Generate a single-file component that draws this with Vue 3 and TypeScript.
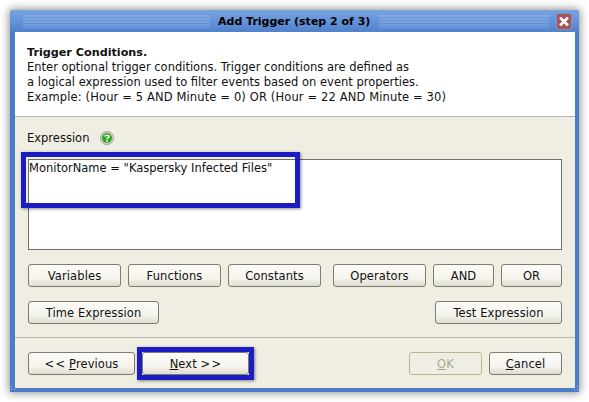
<template>
  <div class="page">
    <div class="window">
      <div class="titlebar">
        <div class="grip grip-left"></div>
        <span class="title">Add Trigger (step 2 of 3)</span>
        <div class="grip grip-right"></div>
        <div class="close" aria-label="Close">
          <svg width="14" height="15" viewBox="0 0 14 15">
            <path d="M4 4.5 L10 10.5 M10 4.5 L4 10.5" stroke="#fff" stroke-width="2.6" stroke-linecap="square" fill="none" />
          </svg>
        </div>
      </div>

      <div class="content">
        <header class="intro">
          <strong>Trigger Conditions.</strong>
          <p>Enter optional trigger conditions. Trigger conditions are defined as</p>
          <p>a logical expression used to filter events based on event properties.</p>
          <p class="example">Example: (Hour = 5 AND Minute = 0) OR (Hour = 22 AND Minute = 30)</p>
        </header>

        <section class="body">
          <div class="label-row">
            <span class="label">Expression</span>
            <svg class="help" width="14" height="14" viewBox="0 0 14 14">
              <circle cx="7" cy="7" r="6.5" fill="#d4d4cc" stroke="#a2a29a" stroke-width="1" />
              <circle cx="7" cy="7" r="5" fill="#2ea81c" />
              <path d="M5 5.6 C5 3.8 9 3.8 9 5.6 C9 6.8 7 6.8 7 8.2" stroke="#fff" stroke-width="1.6" fill="none" />
              <rect x="6.2" y="9.2" width="1.6" height="1.6" fill="#fff" />
            </svg>
          </div>

          <div class="editor">MonitorName = "Kaspersky Infected Files"</div>

          <div class="row row-ops">
            <button class="btn w93">Variables</button>
            <button class="btn w93">Functions</button>
            <button class="btn w93">Constants</button>
            <button class="btn w93 op-gap">Operators</button>
            <button class="btn w61">AND</button>
            <button class="btn w61">OR</button>
          </div>

          <div class="row row-time">
            <button class="btn time">Time Expression</button>
            <button class="btn test">Test Expression</button>
          </div>
        </section>

        <footer class="footer">
          <button class="btn nav">&lt;&#8202;&lt; <u>P</u>revious</button>
          <button class="btn nav next"><u>N</u>ext &gt;&#8202;&gt;</button>
          <button class="btn ok" disabled><u>O</u>K</button>
          <button class="btn cancel"><u>C</u>ancel</button>
        </footer>
      </div>

      <svg class="corner corner-left" width="7" height="7" viewBox="0 0 7 7">
        <path d="M1 1h1v1H1zM1 4h1v1H1zM4 4h1v1H4z" fill="#a8c2e6" />
      </svg>
      <svg class="corner corner-right" width="7" height="7" viewBox="0 0 7 7">
        <path d="M5 1h1v1H5zM5 4h1v1H5zM2 4h1v1H2z" fill="#a8c2e6" />
      </svg>

      <div class="mark mark-expr"></div>
      <div class="mark mark-next"></div>
    </div>
  </div>
</template>

<script setup lang="ts">
</script>

<style>
html,
body {
  margin: 0;
  background: #fff;
}
</style>

<style scoped>
.page {
  width: 589px;
  height: 402px;
  padding: 10px;
  box-sizing: border-box;
  overflow: hidden;
  font-family: "DejaVu Sans", sans-serif;
  font-size: 11.5px;
  color: #111;
}
.window {
  position: relative;
  width: 569px;
  height: 382px;
  display: flex;
  flex-direction: column;
  box-sizing: border-box;
  background: #4a7cc8;
  border-radius: 3px 3px 0 0;
  padding: 0 4px 4px 5px;
  box-shadow: 0 0 8px 1px rgba(0, 0, 0, 0.45);
}
.titlebar {
  height: 22px;
  flex: none;
  display: flex;
  align-items: center;
  padding: 0 8px 0 13px;
  margin: 0 -4px 0 -5px;
  border-radius: 3px 3px 0 0;
  background: linear-gradient(#78a3e0, #6292d8 55%, #4f82cc);
}
.grip {
  height: 14px;
  background: repeating-linear-gradient(transparent 0 1px, rgba(255, 255, 255, 0.14) 1px 3px);
}
.grip-left {
  flex: none;
  width: 187px;
  margin-right: 8px;
}
.grip-right {
  flex: 1;
  margin: 0 8px 0 9px;
}
.title {
  font-size: 11px;
  font-weight: 700;
  color: #000;
  white-space: nowrap;
}
.close {
  flex: none;
  width: 14px;
  height: 15px;
  background: #a9545a;
  box-shadow: 0 0 0 1px #7d93b8;
  border-radius: 2px;
}
.close svg {
  display: block;
}
.content {
  flex: 1;
  display: flex;
  flex-direction: column;
  background: #f0eee3;
}
.intro {
  height: 85px;
  flex: none;
  box-sizing: border-box;
  padding: 13px 12px 0;
  background: #fff;
  border-bottom: 1px solid #b4b4b0;
  line-height: 15px;
}
.intro strong {
  display: block;
  font-size: 11.2px;
}
.intro p {
  margin: 0;
}
.intro .example {
  letter-spacing: 0.13px;
}
.body {
  flex: none;
  height: 221px;
  box-sizing: border-box;
  padding: 0 13px;
  border-bottom: 1px solid #b9b8ab;
}
.label-row {
  height: 42px;
  display: flex;
  align-items: center;
  gap: 11px;
}
.label {
  margin-left: -1px;
}
.editor {
  height: 91px;
  box-sizing: border-box;
  padding: 1px 0 0;
  background: #fff;
  border: 1px solid #6f6f62;
  white-space: pre;
}
.row {
  display: flex;
}
.row-ops {
  margin-top: 14px;
  gap: 7px;
}
.row-time {
  margin-top: 14px;
  justify-content: space-between;
}
.btn {
  height: 23px;
  box-sizing: border-box;
  padding: 0;
  font: inherit;
  letter-spacing: 0.1px;
  color: #111;
  background: linear-gradient(#fcfbf8, #f4f3ec 65%, #dedcd0);
  border: 1px solid #7d7d6e;
  border-radius: 3px;
  text-align: center;
}
.w93 {
  width: 93px;
}
.w61 {
  width: 61px;
}
.op-gap {
  margin-left: 5px;
}
.time {
  width: 131px;
}
.test {
  width: 127px;
}
.footer {
  flex: 1;
  display: flex;
  gap: 7px;
  padding: 14px 13px 0;
}
.nav {
  width: 107px;
}
.ok {
  width: 73px;
  margin-left: auto;
  color: #a9a88f;
  background: #f0eee3;
  border-color: #b9b791;
}
.cancel {
  width: 73px;
}
.corner {
  position: absolute;
  bottom: 0;
}
.corner-left {
  left: 0;
}
.corner-right {
  right: 0;
}
.mark {
  position: absolute;
  box-sizing: border-box;
  border: 5px solid #1c1cc4;
  box-shadow: 1px 1px 3px rgba(0, 0, 0, 0.45);
  pointer-events: none;
}
.mark-expr {
  left: 11px;
  top: 142px;
  width: 279px;
  height: 56px;
}
.mark-next {
  left: 127px;
  top: 337px;
  width: 117px;
  height: 33px;
}
</style>
